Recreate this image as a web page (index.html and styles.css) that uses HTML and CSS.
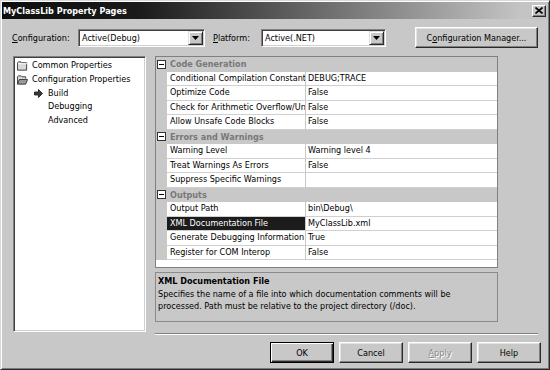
FILE: index.html
```html
<!DOCTYPE html>
<html>
<head>
<meta charset="utf-8">
<title>MyClassLib Property Pages</title>
<link rel="stylesheet" href="styles.css">
</head>
<body>
<div class="window">
  <div class="titlebar">
    <span class="title">MyClassLib Property Pages</span>
    <span class="close"><svg width="8" height="7" viewBox="0 0 8 7"><path d="M0.5 0.5l7 6M7.5 0.5l-7 6" stroke="#000" stroke-width="1.6"/></svg></span>
  </div>

  <div class="configbar">
    <span class="lbl lbl-config"><u>C</u>onfiguration:</span>
    <div class="combo combo-config">
      <span class="combo-text">Active(Debug)</span>
      <span class="drop"><svg width="7" height="4" viewBox="0 0 7 4"><path d="M0 0h7l-3.5 4z" fill="#000"/></svg></span>
    </div>
    <span class="lbl lbl-platform"><u>P</u>latform:</span>
    <div class="combo combo-platform">
      <span class="combo-text">Active(.NET)</span>
      <span class="drop"><svg width="7" height="4" viewBox="0 0 7 4"><path d="M0 0h7l-3.5 4z" fill="#000"/></svg></span>
    </div>
    <button class="btn btn-manager">C<u>o</u>nfiguration Manager...</button>
  </div>

  <div class="main">
    <div class="tree">
      <div class="node top">
        <span class="ico"><svg width="12" height="10" viewBox="0 0 12 10"><path d="M0.5 1.5l1-1h3l1 1h5v8h-10z" fill="#d8d8d8" stroke="#333"/><path d="M1 2.5h10" stroke="#fff"/></svg></span>
        <span>Common Properties</span>
      </div>
      <div class="node top">
        <span class="ico"><svg width="12" height="10" viewBox="0 0 12 10"><path d="M0.5 9.5v-8l1-1h3l1 1h4v2" fill="#d8d8d8" stroke="#333"/><path d="M0.5 9.5l2-5h9l-2 5z" fill="#9a9a9a" stroke="#333"/></svg></span>
        <span>Configuration Properties</span>
      </div>
      <div class="node child">
        <span class="ico"><svg width="9" height="9" viewBox="0 0 9 9"><path d="M0.5 3h4v-2.5l4 4-4 4v-2.5h-4z" fill="#3a3a3a" stroke="#111" stroke-width="0.8"/></svg></span>
        <span>Build</span>
      </div>
      <div class="node child">
        <span class="ico"></span>
        <span>Debugging</span>
      </div>
      <div class="node child">
        <span class="ico"></span>
        <span>Advanced</span>
      </div>
    </div>

    <div class="right">
      <div class="grid">
        <div class="cat">
          <span class="gutter"><svg width="9" height="9" viewBox="0 0 9 9"><rect x="0.5" y="0.5" width="8" height="8" fill="#fff" stroke="#333"/><path d="M2 4.5h5" stroke="#000"/></svg></span>
          <span class="cat-name">Code Generation</span>
        </div>
        <div class="prop"><span class="gutter"></span><span class="name">Conditional Compilation Constants</span><span class="val">DEBUG;TRACE</span></div>
        <div class="prop"><span class="gutter"></span><span class="name">Optimize Code</span><span class="val">False</span></div>
        <div class="prop"><span class="gutter"></span><span class="name">Check for Arithmetic Overflow/Underflow</span><span class="val">False</span></div>
        <div class="prop"><span class="gutter"></span><span class="name">Allow Unsafe Code Blocks</span><span class="val">False</span></div>
        <div class="cat">
          <span class="gutter"><svg width="9" height="9" viewBox="0 0 9 9"><rect x="0.5" y="0.5" width="8" height="8" fill="#fff" stroke="#333"/><path d="M2 4.5h5" stroke="#000"/></svg></span>
          <span class="cat-name">Errors and Warnings</span>
        </div>
        <div class="prop"><span class="gutter"></span><span class="name">Warning Level</span><span class="val">Warning level 4</span></div>
        <div class="prop"><span class="gutter"></span><span class="name">Treat Warnings As Errors</span><span class="val">False</span></div>
        <div class="prop"><span class="gutter"></span><span class="name">Suppress Specific Warnings</span><span class="val"></span></div>
        <div class="cat">
          <span class="gutter"><svg width="9" height="9" viewBox="0 0 9 9"><rect x="0.5" y="0.5" width="8" height="8" fill="#fff" stroke="#333"/><path d="M2 4.5h5" stroke="#000"/></svg></span>
          <span class="cat-name">Outputs</span>
        </div>
        <div class="prop"><span class="gutter"></span><span class="name">Output Path</span><span class="val">bin\Debug\</span></div>
        <div class="prop selected"><span class="gutter"></span><span class="name">XML Documentation File</span><span class="val">MyClassLib.xml</span></div>
        <div class="prop"><span class="gutter"></span><span class="name">Generate Debugging Information</span><span class="val">True</span></div>
        <div class="prop"><span class="gutter"></span><span class="name">Register for COM Interop</span><span class="val">False</span></div>
        <div class="filler"></div>
      </div>
      <div class="desc">
        <div class="desc-title">XML Documentation File</div>
        <div class="desc-text">Specifies the name of a file into which documentation comments will be processed. Path must be relative to the project directory (/doc).</div>
      </div>
      <div class="sep"></div>
    </div>
  </div>

  <div class="buttons">
    <button class="btn btn-default">OK</button>
    <button class="btn">Cancel</button>
    <button class="btn disabled"><u>A</u>pply</button>
    <button class="btn">Help</button>
  </div>
</div>
</body>
</html>
```

FILE: styles.css
```css
* { box-sizing: border-box; }

html, body {
  margin: 0;
  padding: 0;
  background: #c8c8c8;
}

body {
  width: 550px;
  height: 370px;
  overflow: hidden;
  font-family: "DejaVu Sans Condensed", "DejaVu Sans", sans-serif;
  font-stretch: semi-condensed;
  font-size: 9px;
  color: #000;
}

.window {
  width: 550px;
  height: 370px;
  border: 1px solid;
  border-color: #d8d8d8 #2a2a2a #2a2a2a #d8d8d8;
  box-shadow: inset 1px 1px 0 #fff, inset -1px -1px 0 #7a7a7a;
  padding: 1px;
  display: flex;
  flex-direction: column;
  background: #c8c8c8;
}

/* title bar */
.titlebar {
  height: 17px;
  flex: none;
  background: linear-gradient(to right, #0e0e0e 0%, #1a1a1a 25%, #c4c4c4 95%);
  display: flex;
  align-items: center;
  justify-content: space-between;
  padding: 0 2px 0 1px;
}

.title {
  color: #fff;
  font-weight: bold;
}

.close {
  width: 14px;
  height: 12px;
  background: #c8c8c8;
  border: 1px solid;
  border-color: #fff #2a2a2a #2a2a2a #fff;
  box-shadow: inset -1px -1px 0 #808080;
  display: flex;
  align-items: center;
  justify-content: center;
}

.close svg { display: block; }

/* configuration row */
.configbar {
  flex: none;
  height: 21px;
  margin-top: 8px;
  padding: 0 10px;
  display: flex;
  align-items: center;
}

.lbl { white-space: nowrap; }
.lbl-config { width: 66px; }
.lbl-platform { width: 48px; margin-left: 8px; }

.combo {
  height: 18px;
  background: #fff;
  border: 1px solid;
  border-color: #808080 #fff #fff #808080;
  box-shadow: inset 1px 1px 0 #404040, inset -1px -1px 0 #d0d0d0;
  padding: 1px;
  display: flex;
}

.combo-config { width: 127px; }
.combo-platform { width: 125px; }

.combo-text {
  flex: 1;
  padding-left: 2px;
  line-height: 14px;
  white-space: nowrap;
}

.drop {
  width: 15px;
  height: 14px;
  background: #c8c8c8;
  border: 1px solid;
  border-color: #e0e0e0 #2a2a2a #2a2a2a #e0e0e0;
  box-shadow: inset 1px 1px 0 #fff, inset -1px -1px 0 #808080;
  display: flex;
  align-items: center;
  justify-content: center;
}

.drop svg { display: block; }

.btn {
  font: inherit;
  color: #000;
  background: #c8c8c8;
  border: 1px solid;
  border-color: #fff #2a2a2a #2a2a2a #fff;
  box-shadow: inset -1px -1px 0 #808080, inset 1px 1px 0 #e4e4e4;
  padding: 0;
  height: 21px;
  width: 64px;
  text-align: center;
  white-space: nowrap;
}

.btn-manager {
  margin-left: auto;
  width: 123px;
}

.btn-default {
  border-color: #000;
  box-shadow: inset 1px 1px 0 #fff, inset -1px -1px 0 #2a2a2a, inset -2px -2px 0 #808080;
}

.btn.disabled {
  color: #8a8a8a;
  text-shadow: 1px 1px 0 #fff;
}

/* main area */
.main {
  flex: none;
  margin-top: 8px;
  padding-left: 11px;
  display: flex;
  align-items: flex-start;
}

.tree {
  width: 133px;
  height: 276px;
  background: #fff;
  border: 1px solid;
  border-color: #808080 #fff #fff #808080;
  box-shadow: inset 1px 1px 0 #404040, inset -1px -1px 0 #d0d0d0;
  padding: 2px 0 0 1px;
}

.node {
  height: 13.8px;
  line-height: 13.8px;
  display: flex;
  align-items: center;
  white-space: nowrap;
}

.node .ico {
  display: flex;
  align-items: center;
  flex: none;
}

.node .ico svg { display: block; }

.node.top { padding-left: 2px; }
.node.top .ico { width: 11px; margin-right: 4px; }

.node.child { padding-left: 19px; }
.node.child .ico { width: 10px; margin-right: 4px; }

.right {
  margin-left: 9px;
  width: 383px;
  display: flex;
  flex-direction: column;
}

/* property grid */
.grid {
  width: 343px;
  height: 212px;
  background: #fff;
  border: 1px solid #808080;
  display: flex;
  flex-direction: column;
}

.cat, .prop {
  flex: none;
  height: 14.5px;
  display: flex;
}

.cat {
  background: #c8c8c8;
  align-items: center;
}

.gutter {
  width: 11px;
  flex: none;
  display: flex;
  align-items: center;
  justify-content: center;
}

.gutter svg { display: block; }

.prop .gutter { background: #c8c8c8; }

.cat-name {
  padding-left: 3px;
  font-weight: bold;
  color: #787878;
}

.prop .name {
  width: 139px;
  flex: none;
  border-right: 1px solid #c8c8c8;
  border-bottom: 1px solid #d0d0d0;
  padding-left: 3px;
  line-height: 13.5px;
  white-space: nowrap;
  overflow: hidden;
  text-overflow: clip;
}

.prop .val {
  flex: 1;
  border-bottom: 1px solid #d0d0d0;
  padding-left: 2px;
  line-height: 13.5px;
  white-space: nowrap;
}

.prop.selected .name {
  background: #1c1c1c;
  color: #fff;
}

.filler {
  flex: 1;
  background: #fff;
}

/* description */
.desc {
  width: 343px;
  height: 50px;
  margin-top: 4px;
  border: 1px solid #8a8a8a;
  padding: 2px 2px 0 2px;
  line-height: 12px;
}

.desc-title { font-weight: bold; }
.desc-text { margin-top: 1px; padding-right: 30px; }

.sep {
  margin-top: 11px;
  height: 2px;
  width: 383px;
  border-top: 1px solid #808080;
  border-bottom: 1px solid #fff;
}

/* bottom buttons */
.buttons {
  flex: none;
  margin-top: 7px;
  padding-right: 7px;
  display: flex;
  justify-content: flex-end;
  gap: 5px;
}
```
